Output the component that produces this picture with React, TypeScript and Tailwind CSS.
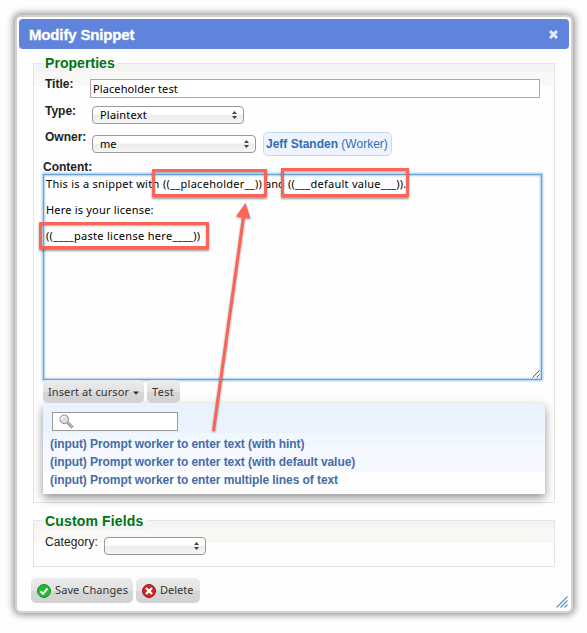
import type { ReactNode } from "react";

const bandClass =
  "bg-[linear-gradient(#f4f4f4_0_8px,#f9f8f4_8px_22px,#fefefe_22px)] border border-[#e4e4e6]";

function Stepper() {
  return (
    <svg width="5" height="8" viewBox="0 0 5 8" className="shrink-0">
      <path d="M2.5 0L5 3H0zM2.5 8L0 5h5z" fill="#444" />
    </svg>
  );
}

function Select({ className, children }: { className: string; children?: ReactNode }) {
  return (
    <div
      className={`flex h-[18px] shrink-0 items-center justify-between rounded-[4px] border border-[#999] bg-[linear-gradient(#fff_0_45%,#ececec_50%,#f5f5f5)] pl-[7px] pr-[6px] text-[11px] text-black ${className}`}
    >
      <span>{children}</span>
      <Stepper />
    </div>
  );
}

function Legend({ children, className }: { children: ReactNode; className: string }) {
  return (
    <div
      className={`ml-[9px] h-[18px] whitespace-nowrap bg-[linear-gradient(#fefefe_0_9px,#f4f4f4_9px)] pl-[2px] font-['Liberation_Sans',sans-serif] text-[14px] font-bold leading-[18px] text-[#007413] ${className}`}
    >
      {children}
    </div>
  );
}

function Label({ children }: { children: ReactNode }) {
  return (
    <span className="block shrink-0 whitespace-nowrap font-['Liberation_Sans',sans-serif] text-[12px] font-bold leading-[14px] text-[#222]">
      {children}
    </span>
  );
}

const buttonClass =
  "flex items-center rounded-[5px] bg-[linear-gradient(#ececec,#e2e2e2_50%,#d6d6d6_52%,#d2d2d2)] text-[11px] text-[#333] whitespace-nowrap";

const callout =
  "absolute border-[3px] border-[#fa6557] shadow-[0_2px_2px_rgba(0,0,0,0.4),inset_0_1px_2px_rgba(0,0,0,0.3)]";

export default function App() {
  return (
    <div className="relative h-[633px] w-[587px] overflow-hidden bg-[#fefefe] p-[15px] font-['Noto_Sans',sans-serif]">
      <div className="h-[598px] w-[558px] rounded-[6px] border-2 border-[#d2d2d2] bg-[#fefefe] p-[2px] shadow-[0_0_7px_2px_rgba(0,0,0,0.42)]">
        <header className="flex h-[30px] items-center justify-between rounded-[4px] bg-[#6084dc] pl-[10px] pr-[11px]">
          <h1 className="mt-px font-['Liberation_Sans',sans-serif] text-[15px] font-bold leading-[18px] tracking-[-0.15px] text-white [-webkit-text-stroke:0.3px_white]">
            Modify Snippet
          </h1>
          <svg width="9" height="9" viewBox="0 0 9 9" className="mt-px">
            <path d="M1 1L8 8M8 1L1 8" stroke="#dfeafa" strokeWidth="3" />
          </svg>
        </header>

        <main className="px-[14px]">
          <section className={`mt-[14px] h-[440px] ${bandClass}`}>
            <Legend className="-mt-[10px] w-[74px] tracking-[0.05px]">Properties</Legend>

            <div className="flex pl-[11px]">
              <div className="w-[45px] pt-[5px]">
                <Label>Title:</Label>
              </div>
              <div className="mt-[7px] flex h-[19px] w-[450px] items-center border border-[#aaa] bg-white pl-[2px] text-[11px] text-black">
                <span className="mt-px tracking-[0.1px]">Placeholder test</span>
              </div>
            </div>

            <div className="flex h-[29px] pl-[11px]">
              <div className="w-[47px] pt-[6px]">
                <Label>Type:</Label>
              </div>
              <Select className="mt-[8px] w-[152px]">
                <span className="tracking-[0.2px]">Plaintext</span>
              </Select>
            </div>

            <div className="flex h-[33px] pl-[11px]">
              <div className="w-[47px] pt-[3px]">
                <Label>Owner:</Label>
              </div>
              <Select className="mt-[8px] w-[164px]">me</Select>
              <div className="ml-[7px] mt-[5px] flex h-[24px] w-[129px] items-center whitespace-nowrap rounded-[5px] border border-[#c2dcee] bg-[#edf4fd] pl-[2px] font-['Liberation_Sans',sans-serif] text-[12px] text-[#326eb4]">
                <span>
                  <b>Jeff Standen</b> (Worker)
                </span>
              </div>
            </div>

            <div className="pl-[9px]">
              <Label>Content:</Label>
              <div className="flex h-[206px] w-[499px] flex-col items-end justify-between border border-[#6aa2d6] bg-[#fefefe] pl-[2px] text-[11px] leading-[13px] text-black shadow-[0_0_2px_1px_#9cc7e9,inset_0_0_2px_1px_#a9cdec]">
                <div className="w-full whitespace-nowrap pt-[2px]">
                  <p className="flex">
                    <span className="w-[117px] tracking-[0.27px]">This is a snippet with</span>
                    <span className="w-[102px] tracking-[0.28px]">((__placeholder__))</span>
                    <span className="w-[23px]">and</span>
                    <span className="tracking-[0.25px]">((___default value___)).</span>
                  </p>
                  <p className="mt-[13px] tracking-[0.2px]">Here is your license:</p>
                  <p className="mt-[13px] tracking-[0.3px]">((____paste license here____))</p>
                </div>
                <svg width="9" height="9" viewBox="0 0 9 9">
                  <path d="M0.5 7.5L7.5 0.5M4.5 7.5L7.5 4.5" stroke="#555" strokeWidth="1" />
                </svg>
              </div>

              <div className="flex gap-[3px]">
                <div className={`h-[23px] w-[101px] gap-[4px] pl-[5px] ${buttonClass}`}>
                  <span className="mt-px tracking-[0.1px]">Insert at cursor</span>
                  <svg width="6" height="4" viewBox="0 0 6 4" className="mt-[2px]">
                    <path d="M0 0.5h6L3 3.8z" fill="#333" />
                  </svg>
                </div>
                <div className={`h-[23px] w-[33px] pl-[5px] tracking-[0.3px] ${buttonClass}`}>
                  <span className="mt-px">Test</span>
                </div>
              </div>

              <div className="h-[91px] w-[502px] bg-[linear-gradient(#eaf3fd_0_30px,#f0f7ff_30px_42px,#f5f8ff_42px_69px,#fefefe_69px)] pl-[7px] pt-[9px] shadow-[0_4px_9px_rgba(0,0,0,0.42)]">
                <div className="ml-[2px] flex h-[19px] w-[126px] items-center border border-[#999] bg-white pl-[6px]">
                  <svg width="15" height="15" viewBox="0 0 15 15">
                    <path d="M8.5 8.5L13.5 13.5" stroke="#888" strokeWidth="3" />
                    <path d="M8.5 8.2L13 12.8" stroke="#ccc" strokeWidth="1.2" />
                    <circle cx="5.3" cy="5.3" r="4.3" fill="#dedede" stroke="#888" />
                    <path d="M2.5 6A3 3 0 0 1 6 2.5" stroke="#fff" strokeWidth="1.5" fill="none" />
                  </svg>
                </div>
                <ul className="mt-[4px] whitespace-nowrap font-['Liberation_Sans',sans-serif] text-[12px] font-bold leading-[18px] tracking-[-0.075px] text-[#466ca4]">
                  <li>(input) Prompt worker to enter text (with hint)</li>
                  <li>(input) Prompt worker to enter text (with default value)</li>
                  <li>(input) Prompt worker to enter multiple lines of text</li>
                </ul>
              </div>
            </div>
          </section>

          <section className={`mt-[17px] h-[47px] ${bandClass}`}>
            <Legend className="-mt-[9px] w-[104px] tracking-[0.15px]">Custom Fields</Legend>
            <div className="flex pl-[11px]">
              <span className="w-[59px] pt-[5px] font-['Liberation_Sans',sans-serif] text-[12px] leading-[14px] tracking-[0.1px] text-[#222]">
                Category:
              </span>
              <Select className="mt-[7px] w-[102px]" />
            </div>
          </section>
        </main>

        <footer className="flex h-[33px] items-start justify-between pl-[12px] pt-[11px]">
          <div className="flex gap-[3px]">
            <div className={`h-[25px] w-[102px] gap-[4px] pl-[6px] ${buttonClass}`}>
              <svg width="14" height="14" viewBox="0 0 14 14">
                <circle cx="7" cy="7" r="6.5" fill="#22b933" stroke="#159126" />
                <path d="M3.5 7.3L6 9.8L10.5 4.5" stroke="white" strokeWidth="2" fill="none" />
              </svg>
              <span className="tracking-[0.1px]">Save Changes</span>
            </div>
            <div className={`h-[25px] w-[64px] gap-[4px] pl-[6px] ${buttonClass}`}>
              <svg width="14" height="14" viewBox="0 0 14 14">
                <circle cx="7" cy="7" r="6.5" fill="#cc2525" stroke="#a01818" />
                <path d="M4 4L10 10M10 4L4 10" stroke="white" strokeWidth="2.4" />
              </svg>
              <span>Delete</span>
            </div>
          </div>
          <svg width="12" height="12" viewBox="0 0 12 12" className="mr-px mt-[18px] shrink-0">
            <path d="M0.5 11.5L11.5 0.5M4.5 11.5L11.5 4.5M8.5 11.5L11.5 8.5" stroke="#4f96d2" strokeWidth="1.1" />
          </svg>
        </footer>
      </div>

      <div className={`${callout} left-[152px] top-[169px] h-[28px] w-[115px]`} />
      <div className={`${callout} left-[281px] top-[168px] h-[29px] w-[128px]`} />
      <div className={`${callout} left-[39px] top-[222px] h-[27px] w-[170px]`} />
      <svg
        width="60"
        height="240"
        viewBox="200 195 60 240"
        className="absolute left-[200px] top-[195px] drop-shadow-[0_1px_1px_rgba(0,0,0,0.4)]"
      >
        <path d="M213.5 431L243.5 217" stroke="#fa6557" strokeWidth="3" />
        <path d="M245.5 203L236 216.5L250.5 218.5z" fill="#fa6557" />
      </svg>
    </div>
  );
}
